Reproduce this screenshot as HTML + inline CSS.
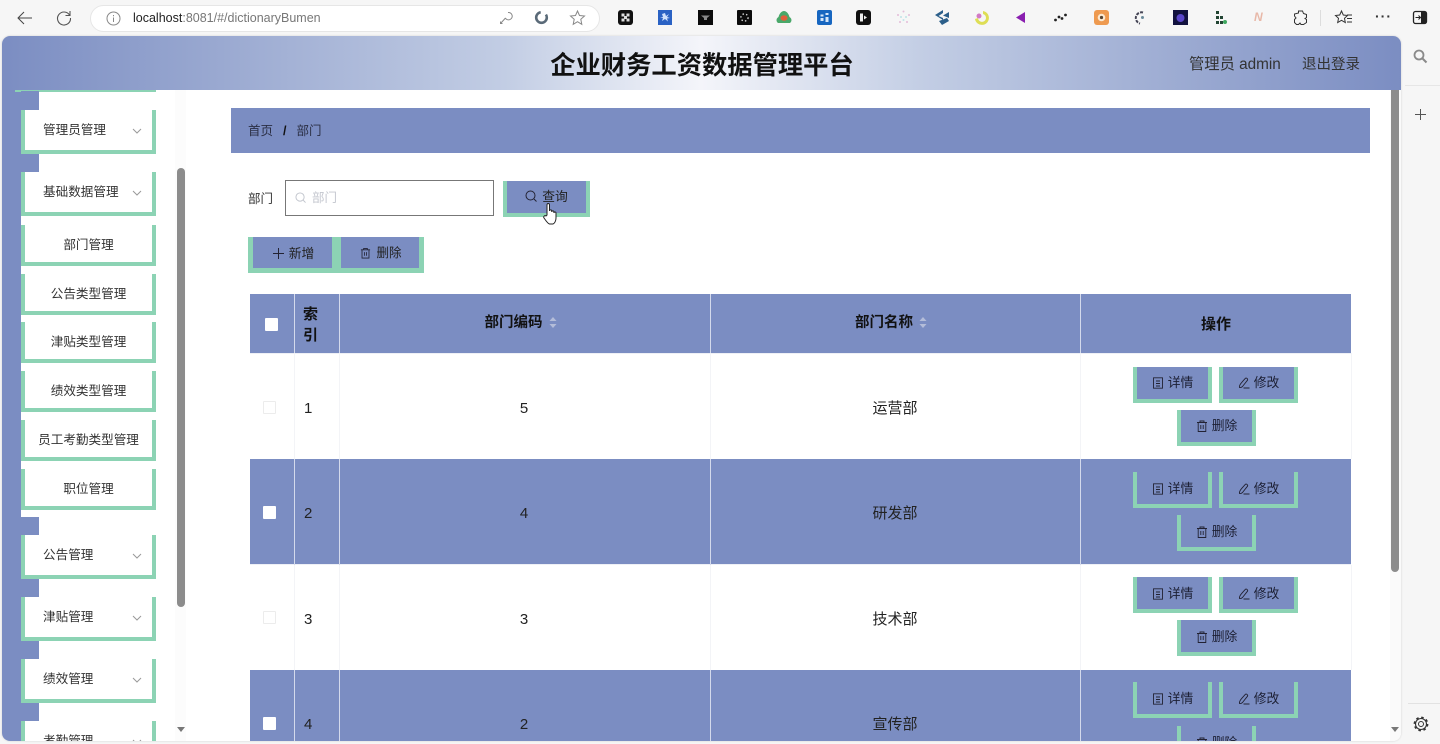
<!DOCTYPE html>
<html lang="zh"><head><meta charset="utf-8"><title>部门</title>
<style>
*{box-sizing:border-box}
html,body{margin:0;padding:0;width:1440px;height:744px;overflow:hidden;background:#f6f6f6;font-family:"Liberation Sans","Noto Sans CJK SC",sans-serif;color:#222}
.a{position:absolute}
#app{position:absolute;left:2px;top:36px;width:1399px;height:705px;background:#fff;border-radius:8px;overflow:hidden;box-shadow:0 0 2px rgba(0,0,0,.15)}
#in{position:absolute;left:-2px;top:-36px;width:1440px;height:744px}
.ext{position:absolute;top:10px}
.tab{position:absolute;left:21px;width:18px;height:19px;background:#7b8dc2}
.mi{position:absolute;left:21px;width:135px;background:#fff;border:4px solid #8cd3b4;border-top:0;font-size:12.600px;color:#333}
.mi span{position:absolute;left:18px;top:0;line-height:41px;white-space:nowrap}
.mi svg{position:absolute;left:107px;top:18px}
.si{position:absolute;left:21px;width:135px;height:41px;background:#fff;border:4px solid #8cd3b4;border-top:0;font-size:12.600px;color:#333;text-align:center;line-height:40px;white-space:nowrap}
.th{position:absolute;top:294px;height:59px;background:#7b8dc2;color:#111;font-weight:700;font-size:14.500px;text-align:center;line-height:59px;white-space:nowrap}
.row{position:absolute;left:250px;width:1101px}
.b{background:#7b8dc2}
.vl{position:absolute;width:1px;background:#d4daec}
.td{position:absolute;font-size:15px;color:#222;text-align:center;white-space:nowrap}
.cb{position:absolute;left:263px;width:13px;height:13px;background:#fff;border-radius:1px}
.cb.f{border:1px solid #ececec}
.btn{position:absolute;width:79px;height:36px;background:#7b8dc2;border:4px solid #8cd3b4;border-top:0;font-size:12.800px;color:#1c1f33;line-height:32px;white-space:nowrap;text-align:center}
.btn.l{line-height:34px}
.btn svg{vertical-align:-2px;margin-right:4px}
svg{overflow:visible}
</style></head><body>
<svg width="0" height="0" style="position:absolute">
<defs>
<symbol id="doc" viewBox="0 0 12 12"><path d="M1.500.8h9v10.400h-9zM4 4h4M4 6.500h4M4 9h4" fill="none" stroke="#223" stroke-width=".9"/></symbol>
<symbol id="pen" viewBox="0 0 12 12"><path d="M1.500 10.500C1 8 2.800 6.500 7.500 1.200c1.200-.6 2.600.8 2 2L4.500 9.500c-1 1-2.200 1.200-3 1zM5.500 11h6" fill="none" stroke="#223" stroke-width=".9"/></symbol>
<symbol id="del" viewBox="0 0 12 12"><path d="M1 2.500h10M4 2.500V1h4v1.500M2.200 2.500v9h7.600v-9M4.800 5v4M7.200 5v4" fill="none" stroke="#223" stroke-width=".9"/></symbol>
<symbol id="chev" viewBox="0 0 10 6"><path d="M1 1l4 4 4-4" fill="none" stroke="#999" stroke-width="1"/></symbol>
<symbol id="mag" viewBox="0 0 12 12"><circle cx="5.500" cy="5.500" r="4.500" fill="none" stroke="currentColor" stroke-width="1"/><path d="M9 9l2.500 2.500" stroke="currentColor" stroke-width="1"/></symbol>
<symbol id="sort" viewBox="0 0 8 11"><path d="M4 0l3.500 4h-7zM4 11L.5 7h7z" fill="#b4bdd9"/></symbol>
</defs></svg>

<!-- browser toolbar -->
<svg class="a" style="left:16px;top:10px" width="17" height="16"><path d="M16 8H2M8 2L2 8l6 6" fill="none" stroke="#444" stroke-width="1"/></svg>
<svg class="a" style="left:56px;top:10px" width="16" height="16"><path d="M13.500 5A6.500 6.500 0 1 0 14.500 8M14 1v4.500H9.500" fill="none" stroke="#555" stroke-width="1.100"/></svg>
<div class="a" style="left:90px;top:5px;width:510px;height:27px;background:#fff;border:1px solid #e6e6e6;border-radius:14px"></div>
<svg class="a" style="left:106px;top:11px" width="15" height="15"><circle cx="7.500" cy="7.500" r="6.500" fill="none" stroke="#888"/><path d="M7.500 6.500v4.500M7.500 4v1.300" stroke="#888"/></svg>
<div class="a" style="left:133px;top:9px;font-size:12.500px;line-height:18px;color:#777;white-space:nowrap"><span style="color:#222">localhost</span>:8081/#/dictionaryBumen</div>
<svg class="a" style="left:499px;top:11px" width="14" height="14"><path d="M1.500 12.500l5-5.500M1.500 10.500v2h2M9 1.500a3.700 3.700 0 1 1-2.700 5.500" fill="none" stroke="#888"/></svg>
<svg class="a" style="left:534px;top:10px" width="15" height="15"><circle cx="7.500" cy="7.500" r="5.300" fill="none" stroke="#5a6a78" stroke-width="2.600" stroke-dasharray="24 6"/></svg>
<svg class="a" style="left:570px;top:10px" width="15" height="15"><path d="M7.500 1l2 4.500 5 .5-3.700 3.300 1 5-4.300-2.600-4.300 2.600 1-5L.5 6l5-.5z" fill="none" stroke="#888"/></svg>

<svg class="ext" style="left:618px" width="15" height="15"><rect width="15" height="15" rx="3" fill="#111"/><path d="M3.500 3.500h3v3h-3zM8.500 3.500h3v3h-3zM3.500 8.500h3v3h-3zM8.500 8.500h3v3h-3zM6 6h3v3H6z" fill="#ddd"/></svg>
<svg class="ext" style="left:658px" width="14" height="15"><rect width="14" height="15" fill="#2a62c4"/><path d="M7 3l1 3 3-2-2 3 3 1-3 .5 1 3-3-2.500-3 2 1-3L2 7.500l3-.5-1-3z" fill="#cfe0fb"/></svg>
<svg class="ext" style="left:698px" width="15" height="15"><rect width="15" height="15" fill="#0c0c0c"/><path d="M3 5.500h9L9 8v2H6V8z" fill="#8a8a8a"/></svg>
<svg class="ext" style="left:737px" width="15" height="15"><rect width="15" height="15" rx="1" fill="#0c0c0c"/><circle cx="7.500" cy="7.500" r="3.600" fill="none" stroke="#ddd" stroke-width="1.300" stroke-dasharray="1.500 2.200"/></svg>
<svg class="ext" style="left:776px;top:11px" width="16" height="13"><path d="M2 12c-2.500-2-1.500-5 .5-6C3.500 2 6 0 8 0s4.500 2 5.500 6c2 1 3 4 .5 6z" fill="#4aa86a"/><ellipse cx="8" cy="7" rx="3.500" ry="2.800" fill="#e0603c"/></svg>
<svg class="ext" style="left:817px" width="15" height="15"><rect width="15" height="15" rx="2" fill="#1766c0"/><path d="M3.500 4.500h3v2h-3zM8.500 3h3v2h-3zM8.500 7h3v5h-3zM3.500 8h3v3h-3z" fill="#d4e6fa"/></svg>
<svg class="ext" style="left:856px" width="15" height="15"><rect width="15" height="15" rx="3" fill="#111"/><path d="M4 3.500h3v8H4zM8 5.500l3 2-3 2z" fill="#eee"/></svg>
<svg class="ext" style="left:896px" width="15" height="15"><g fill="#e3bcd8"><circle cx="7.500" cy="1.500" r="1"/><circle cx="2" cy="5" r="1"/><circle cx="13" cy="5" r="1"/><circle cx="4" cy="12" r="1"/><circle cx="11" cy="12" r="1"/></g><g fill="#bfe4e8"><circle cx="5" cy="7" r="1"/><circle cx="10" cy="7" r="1"/><circle cx="7.500" cy="10" r="1"/></g></svg>
<svg class="ext" style="left:934px" width="16" height="15"><path d="M1 5l8-5v3L4.500 6 9 8v2zM15 2L9 5.500 15 8zM5 11l8-3 2 3-7 4z" fill="#2c5f8a"/></svg>
<svg class="ext" style="left:975px;top:11px" width="14" height="14"><path d="M8 0a7 7 0 1 1-8 8l3-1a4 4 0 1 0 5-4z" fill="#dede55"/><circle cx="4" cy="5" r="2.500" fill="#d27ac4"/></svg>
<svg class="ext" style="left:1015px;top:12px" width="11" height="11"><path d="M10 0v11L1 5.500z" fill="#8a1fb0"/></svg>
<svg class="ext" style="left:1054px;top:13px" width="14" height="9"><g fill="#222"><circle cx="1.500" cy="7" r="1.400"/><circle cx="5" cy="4" r="1.400"/><circle cx="8" cy="5.500" r="1.400"/><circle cx="11.500" cy="2" r="1.400"/></g></svg>
<svg class="ext" style="left:1094px" width="15" height="15"><rect width="15" height="15" rx="3" fill="#ee9a50"/><circle cx="7.500" cy="7.500" r="3.800" fill="#fbe9d2"/><circle cx="7.500" cy="7.500" r="1.600" fill="#543"/></svg>
<svg class="ext" style="left:1134px;top:11px" width="13" height="14"><path d="M9 1.500A5.500 5.500 0 1 0 6 12.500" fill="none" stroke="#445" stroke-width="2" stroke-dasharray="3 1.200"/><circle cx="8.500" cy="6.500" r="1.500" fill="#6a8a9a"/></svg>
<svg class="ext" style="left:1173px" width="15" height="15"><rect width="15" height="15" fill="#12123f"/><circle cx="7.500" cy="8" r="4" fill="#5a46c8"/></svg>
<svg class="ext" style="left:1214px;top:11px" width="14" height="14"><path d="M2 0h3v3H2zM2 5h3v3H2zM6 5h3v3H6zM2 10h3v3H2zM6 10h3v3H6z" fill="#243"/><circle cx="11" cy="11" r="2" fill="#3fa860"/></svg>
<div class="a" style="left:1254px;top:10px;font-size:12px;line-height:15px;font-style:italic;color:#e8b8a8;font-weight:700">N</div>
<svg class="a" style="left:1293px;top:10px" width="15" height="15"><path d="M5.500 1h4l1 2.500 3 1v3l-1.500 1 1.500 1v3l-3 2h-2.500l-1-1.500-1.500 1.500h-2l-2-2v-3l1.500-1.500L1.500 6V4l4-1z" fill="none" stroke="#333"/></svg>
<div class="a" style="left:1320px;top:10px;width:1px;height:16px;background:#ddd"></div>
<svg class="a" style="left:1335px;top:10px" width="18" height="15"><path d="M6.500 1l1.800 4 4.200.5-3 2.800.8 4.200-3.800-2.200-3.800 2.200.8-4.200L.5 5.500 4.700 5zM12 5h5M12 8.500h5M12 12h5" fill="none" stroke="#333"/></svg>
<div class="a" style="left:1375px;top:9px;font-size:14px;line-height:14px;letter-spacing:1px;color:#333;font-weight:700">···</div>
<svg class="a" style="left:1413px;top:11px" width="15" height="14"><rect x=".5" y=".5" width="13" height="12" rx="2" fill="none" stroke="#222" stroke-width="1.300"/><rect x="8" y="1" width="5" height="11" fill="#222"/><path d="M2.500 6.500H7M5.500 4.500l2 2-2 2" fill="none" stroke="#222"/></svg>

<!-- right side panel -->
<svg class="a" style="left:1413px;top:49px;color:#8a8a8a" width="15" height="15"><circle cx="6" cy="6" r="4.500" fill="none" stroke="#8a8a8a" stroke-width="1.800"/><path d="M9.500 9.500l4 4" stroke="#8a8a8a" stroke-width="2"/></svg>
<div class="a" style="left:1405px;top:85px;width:35px;height:1px;background:#e6e6e6"></div>
<svg class="a" style="left:1415px;top:109px" width="11" height="11"><path d="M5.500 0v11M0 5.500h11" stroke="#555"/></svg>
<div class="a" style="left:1408px;top:703px;width:32px;height:1px;background:#e2e2e2"></div>
<svg class="a" style="left:1413px;top:716px" width="16" height="16"><circle cx="8" cy="8" r="2.500" fill="none" stroke="#333"/><circle cx="8" cy="8" r="5.500" fill="none" stroke="#333" stroke-width="1.100"/><circle cx="8" cy="8" r="6.500" fill="none" stroke="#333" stroke-width="1.800" stroke-dasharray="2.500 2.600"/></svg>

<div id="app"><div id="in">
<!-- header -->
<div class="a" style="left:0;top:36px;width:1402px;height:54px;background:linear-gradient(90deg,#7b8dc2 0%,#c2cde4 36%,#f4f5fa 50%,#c2cde4 66%,#7b8dc2 100%)"></div>
<div class="a" style="left:401px;top:48px;width:602px;text-align:center;font-size:25.300px;font-weight:700;line-height:36px;color:#111;white-space:nowrap">企业财务工资数据管理平台</div>
<div class="a" style="left:1189px;top:54px;font-size:15.300px;line-height:22px;color:#333;white-space:nowrap">管理员 admin</div>
<div class="a" style="left:1302px;top:54px;font-size:14.500px;line-height:22px;color:#333;white-space:nowrap">退出登录</div>

<!-- sidebar -->
<div class="a" style="left:0;top:90px;width:21px;height:654px;background:#7b8dc2"></div>
<div class="a" style="left:15px;top:90px;width:141px;height:1.500px;background:#8cd3b4"></div>
<div class="tab" style="top:91px"></div>
<div class="mi" style="top:110px;height:44px"><span>管理员管理</span><svg width="10" height="6"><use href="#chev"/></svg></div>
<div class="tab" style="top:154px;height:18px"></div>
<div class="mi" style="top:172px;height:44px"><span>基础数据管理</span><svg width="10" height="6"><use href="#chev"/></svg></div>
<div class="a" style="left:21px;top:216px;width:135px;height:301px;background:#fff;border-radius:0 0 0 5px"></div>
<div class="si" style="top:225px">部门管理</div>
<div class="si" style="top:273.700px">公告类型管理</div>
<div class="si" style="top:322.400px">津贴类型管理</div>
<div class="si" style="top:371px">绩效类型管理</div>
<div class="si" style="top:419.800px">员工考勤类型管理</div>
<div class="si" style="top:468.500px">职位管理</div>
<div class="tab" style="top:517px;height:18px"></div>
<div class="mi" style="top:535px;height:44px"><span>公告管理</span><svg width="10" height="6"><use href="#chev"/></svg></div>
<div class="tab" style="top:579px;height:18px"></div>
<div class="mi" style="top:597px;height:44px"><span>津贴管理</span><svg width="10" height="6"><use href="#chev"/></svg></div>
<div class="tab" style="top:641px;height:18px"></div>
<div class="mi" style="top:659px;height:44px"><span>绩效管理</span><svg width="10" height="6"><use href="#chev"/></svg></div>
<div class="tab" style="top:703px;height:18px"></div>
<div class="mi" style="top:721px;height:44px"><span>考勤管理</span><svg width="10" height="6"><use href="#chev"/></svg></div>

<div class="a" style="left:175px;top:90px;width:11px;height:654px;background:#fcfcfc"></div>
<div class="a" style="left:177px;top:168px;width:8px;height:439px;background:#8c8c8c;border-radius:4px"></div>
<svg class="a" style="left:177px;top:727px" width="8" height="5"><path d="M0 0h8L4 5z" fill="#777"/></svg>

<!-- main scrollbar -->
<div class="a" style="left:1390px;top:90px;width:11px;height:654px;background:#fafafa"></div>
<div class="a" style="left:1391px;top:90px;width:8px;height:482px;background:#8c8c8c;border-radius:0 0 4px 4px"></div>
<svg class="a" style="left:1391px;top:727px" width="8" height="5"><path d="M0 0h8L4 5z" fill="#777"/></svg>

<!-- breadcrumb -->
<div class="a" style="left:231px;top:108px;width:1139px;height:45px;background:#7b8dc2"></div>
<div class="a" style="left:248px;top:122px;font-size:12.500px;line-height:19px;color:#2b2f45;white-space:nowrap">首页<b style="margin:0 10px;color:#111">/</b>部门</div>

<!-- search -->
<div class="a" style="left:248px;top:190px;font-size:12.500px;line-height:18px;color:#333">部门</div>
<div class="a" style="left:285px;top:180px;width:209px;height:36px;border:1px solid #777;background:#fff"></div>
<svg class="a" style="left:295px;top:192px;color:#c0c4cc" width="11" height="11"><use href="#mag"/></svg>
<div class="a" style="left:312px;top:189px;font-size:12.500px;line-height:18px;color:#c4c7cf">部门</div>
<div class="a" style="left:503px;top:181px;width:87px;height:36px;background:#7b8dc2;border:4px solid #8cd3b4;border-top:0;font-size:12.800px;line-height:31px;text-align:center;color:#222"><svg width="12" height="12" style="vertical-align:-1px;margin-right:5px;color:#223"><use href="#mag"/></svg>查询</div>
<svg class="a" style="left:543px;top:202px" width="15" height="23"><path d="M4 13V3c0-2 2.500-2 2.500 0v6c0-1.500 2.200-1.500 2.200 0v1c0-1.500 2.200-1.500 2.200 0v1c0-1.300 2.100-1.300 2.100 0v5c0 3-1.500 5.500-3 6H6.500C4.500 21.500 2.500 18 1 16c-1-1.500.8-3 2-2z" fill="#fff" stroke="#222" stroke-width="1"/></svg>

<div class="a" style="left:248px;top:237px;width:176px;height:36px;background:#8cd3b4"></div>
<div class="a" style="left:253px;top:237px;width:79px;height:31px;background:#7b8dc2;font-size:12.800px;line-height:33px;text-align:center;color:#222;padding-left:2px"><svg width="11" height="11" style="vertical-align:-1px;margin-right:5px"><path d="M5.500 0v11M0 5.500h11" stroke="#223"/></svg>新增</div>
<div class="a" style="left:341px;top:237px;width:78px;height:31px;background:#7b8dc2;font-size:12.500px;line-height:33px;text-align:center;color:#222;padding-left:2px"><svg width="11" height="12" style="vertical-align:-2px;margin-right:5px"><use href="#del"/></svg>删除</div>

<!-- table -->
<div class="th" style="left:250px;width:44px"></div>
<div class="th" style="left:295px;width:44px;line-height:21px;font-size:15px;padding:10px 0 0 8px;white-space:normal;text-align:left">索<br>引</div>
<div class="th" style="left:340px;width:370px;padding-right:9px">部门编码 <svg width="8" height="11" style="vertical-align:-1px;margin-left:2px"><use href="#sort"/></svg></div>
<div class="th" style="left:711px;width:369px;padding-right:9px">部门名称 <svg width="8" height="11" style="vertical-align:-1px;margin-left:2px"><use href="#sort"/></svg></div>
<div class="th" style="left:1081px;width:270px;line-height:62px;font-size:15px">操作</div>
<div class="row b" style="top:459px;height:105px"></div>
<div class="row b" style="top:670px;height:80px"></div>
<div class="row" style="top:353px;height:1px;background:#eef0f6"></div>
<div class="row" style="top:564px;height:1px;background:#eef0f6"></div>
<div class="vl" style="left:294px;top:294px;height:450px"></div>
<div class="vl" style="left:339px;top:294px;height:450px"></div>
<div class="vl" style="left:710px;top:294px;height:450px"></div>
<div class="vl" style="left:1080px;top:294px;height:450px"></div>
<div class="vl" style="left:294px;top:353px;height:106px;background:#f3f4f7"></div>
<div class="vl" style="left:339px;top:353px;height:106px;background:#f3f4f7"></div>
<div class="vl" style="left:710px;top:353px;height:106px;background:#f3f4f7"></div>
<div class="vl" style="left:1080px;top:353px;height:106px;background:#f3f4f7"></div>
<div class="vl" style="left:1351px;top:353px;height:106px;background:#f3f4f7"></div>
<div class="vl" style="left:294px;top:565px;height:105px;background:#f3f4f7"></div>
<div class="vl" style="left:339px;top:565px;height:105px;background:#f3f4f7"></div>
<div class="vl" style="left:710px;top:565px;height:105px;background:#f3f4f7"></div>
<div class="vl" style="left:1080px;top:565px;height:105px;background:#f3f4f7"></div>
<div class="vl" style="left:1351px;top:565px;height:105px;background:#f3f4f7"></div>

<div class="cb" style="top:318px;left:265px"></div>
<div class="cb f" style="top:401px"></div>
<div class="cb" style="top:506px"></div>
<div class="cb f" style="top:611px"></div>
<div class="cb" style="top:717px"></div>

<div class="td" style="left:304px;top:399px;line-height:20px">1</div>
<div class="td" style="left:504px;width:40px;top:399px;line-height:20px">5</div>
<div class="td" style="left:845px;width:100px;top:399px;line-height:20px">运营部</div>
<div class="td" style="left:304px;top:504px;line-height:20px">2</div>
<div class="td" style="left:504px;width:40px;top:504px;line-height:20px">4</div>
<div class="td" style="left:845px;width:100px;top:504px;line-height:20px">研发部</div>
<div class="td" style="left:304px;top:610px;line-height:20px">3</div>
<div class="td" style="left:504px;width:40px;top:610px;line-height:20px">3</div>
<div class="td" style="left:845px;width:100px;top:610px;line-height:20px">技术部</div>
<div class="td" style="left:304px;top:715px;line-height:20px">4</div>
<div class="td" style="left:504px;width:40px;top:715px;line-height:20px">2</div>
<div class="td" style="left:845px;width:100px;top:715px;line-height:20px">宣传部</div>

<div class="btn" style="left:1133px;top:367px"><svg width="12" height="12"><use href="#doc"/></svg>详情</div>
<div class="btn" style="left:1219px;top:367px"><svg width="12" height="12"><use href="#pen"/></svg>修改</div>
<div class="btn" style="left:1177px;top:410px"><svg width="12" height="12"><use href="#del"/></svg>删除</div>
<div class="btn l" style="left:1133px;top:472px"><svg width="12" height="12"><use href="#doc"/></svg>详情</div>
<div class="btn l" style="left:1219px;top:472px"><svg width="12" height="12"><use href="#pen"/></svg>修改</div>
<div class="btn l" style="left:1177px;top:515px"><svg width="12" height="12"><use href="#del"/></svg>删除</div>
<div class="btn l" style="left:1133px;top:577px"><svg width="12" height="12"><use href="#doc"/></svg>详情</div>
<div class="btn l" style="left:1219px;top:577px"><svg width="12" height="12"><use href="#pen"/></svg>修改</div>
<div class="btn l" style="left:1177px;top:620px"><svg width="12" height="12"><use href="#del"/></svg>删除</div>
<div class="btn l" style="left:1133px;top:682px"><svg width="12" height="12"><use href="#doc"/></svg>详情</div>
<div class="btn l" style="left:1219px;top:682px"><svg width="12" height="12"><use href="#pen"/></svg>修改</div>
<div class="btn l" style="left:1177px;top:726px"><svg width="12" height="12"><use href="#del"/></svg>删除</div>
</div></div>
</body></html>
